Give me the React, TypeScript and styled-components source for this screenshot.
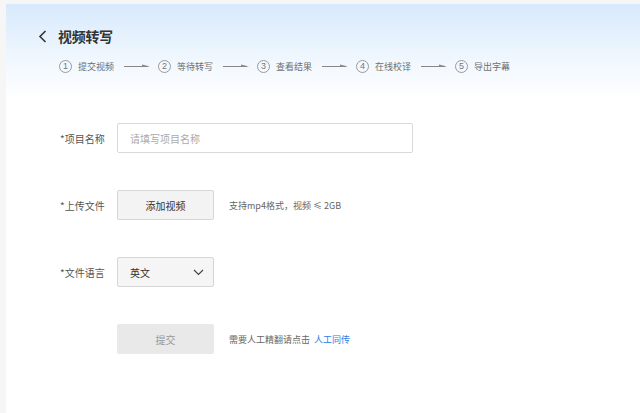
import styled, { createGlobalStyle } from "styled-components";

const GlobalStyle = createGlobalStyle`
  html, body {
    margin: 0;
    padding: 0;
    background: #f6f6f6;
    font-family: "Noto Sans CJK SC", "Noto Sans", sans-serif;
  }
`;

const Page = styled.div`
  padding: 4px 0 0 6px;
  height: 413px;
  box-sizing: border-box;
  overflow: hidden;
`;

const Panel = styled.div`
  height: 100%;
  background: linear-gradient(180deg, #d7e9fc 0px, #eef6fe 50px, #ffffff 96px);
  box-sizing: border-box;
`;

const Header = styled.div`
  padding: 22px 0 0 32px;
`;

const TitleRow = styled.div`
  display: flex;
  align-items: center;
  gap: 11px;
  height: 20px;
`;

const Title = styled.h1`
  margin: 0;
  font-size: 14px;
  font-weight: 700;
  color: #333;
  letter-spacing: -0.3px;
`;

const Steps = styled.div`
  display: flex;
  align-items: center;
  margin-top: 12px;
  padding-left: 21px;
  height: 16px;
`;

const Step = styled.div`
  display: flex;
  align-items: center;
  gap: 6px;
`;

const Circle = styled.span`
  width: 13px;
  height: 13px;
  border: 1px solid #9a9a9a;
  border-radius: 50%;
  box-sizing: border-box;
  display: flex;
  align-items: center;
  justify-content: center;
  font-family: "Liberation Sans", sans-serif;
  font-size: 9px;
  color: #777;
  line-height: 1;
`;

const StepText = styled.span`
  font-size: 9px;
  color: #6f6f6f;
`;

const Arrow = styled.svg`
  margin: 0 8px 0 4px;
  display: block;
`;

const Form = styled.div`
  padding: 49px 0 0 54px;
  display: flex;
  flex-direction: column;
  gap: 37px;
`;

const Row = styled.div`
  display: flex;
  align-items: center;
  height: 30px;
`;

const Label = styled.label`
  width: 57px;
  flex-shrink: 0;
  font-size: 10px;
  color: #555;
`;

const Input = styled.input`
  width: 296px;
  height: 30px;
  box-sizing: border-box;
  border: 1px solid #d9d9d9;
  border-radius: 2px;
  padding: 0 12px;
  font-family: inherit;
  font-size: 10px;
  color: #333;
  background: #fff;
  outline: none;
  &::placeholder {
    color: #aaa;
  }
`;

const Button = styled.button<{ $disabled?: boolean }>`
  width: 97px;
  height: 30px;
  box-sizing: border-box;
  border: 1px solid ${(p) => (p.$disabled ? "#e9e9e9" : "#d6d6d6")};
  border-radius: 2px;
  background: ${(p) => (p.$disabled ? "#e9e9e9" : "#f3f3f3")};
  color: ${(p) => (p.$disabled ? "#999" : "#333")};
  font-family: inherit;
  font-size: 10px;
  padding: 0;
  cursor: pointer;
`;

const Select = styled.div`
  width: 97px;
  height: 30px;
  box-sizing: border-box;
  border: 1px solid #d6d6d6;
  border-radius: 2px;
  background: #f5f5f5;
  display: flex;
  align-items: center;
  justify-content: space-between;
  padding: 0 9px 0 12px;
  font-size: 10px;
  color: #333;
`;

const Hint = styled.span`
  margin-left: 15px;
  font-size: 9px;
  color: #666;
`;

const Link = styled.a`
  color: #2e7de6;
  text-decoration: none;
  margin-left: 4px;
`;

const steps = ["提交视频", "等待转写", "查看结果", "在线校译", "导出字幕"];

const StepArrow = () => (
  <Arrow width="26" height="6" viewBox="0 0 26 6">
    <line x1="0" y1="3.5" x2="24" y2="3.5" stroke="#888" strokeWidth="1" />
    <path d="M18 1.5 L26 3.5 L18 4 Z" fill="#888" />
  </Arrow>
);

export default function App() {
  return (
    <>
      <GlobalStyle />
      <Page>
        <Panel>
          <Header>
            <TitleRow>
              <svg width="9" height="13" viewBox="0 0 9 13">
                <path d="M7.5 1 L2 6.5 L7.5 12" fill="none" stroke="#333" strokeWidth="1.6" />
              </svg>
              <Title>视频转写</Title>
            </TitleRow>
            <Steps>
              {steps.map((s, i) => (
                <Step key={s}>
                  <Circle>{i + 1}</Circle>
                  <StepText>{s}</StepText>
                  {i < steps.length - 1 && <StepArrow />}
                </Step>
              ))}
            </Steps>
          </Header>
          <Form>
            <Row>
              <Label>*项目名称</Label>
              <Input placeholder="请填写项目名称" />
            </Row>
            <Row>
              <Label>*上传文件</Label>
              <Button>添加视频</Button>
              <Hint>支持mp4格式，视频 ≤ 2GB</Hint>
            </Row>
            <Row>
              <Label>*文件语言</Label>
              <Select>
                <span>英文</span>
                <svg width="11" height="7" viewBox="0 0 11 7">
                  <path d="M1 1 L5.5 5.5 L10 1" fill="none" stroke="#444" strokeWidth="1.2" />
                </svg>
              </Select>
            </Row>
            <Row>
              <Label />
              <Button $disabled>提交</Button>
              <Hint>
                需要人工精翻请点击
                <Link href="#">人工同传</Link>
              </Hint>
            </Row>
          </Form>
        </Panel>
      </Page>
    </>
  );
}
